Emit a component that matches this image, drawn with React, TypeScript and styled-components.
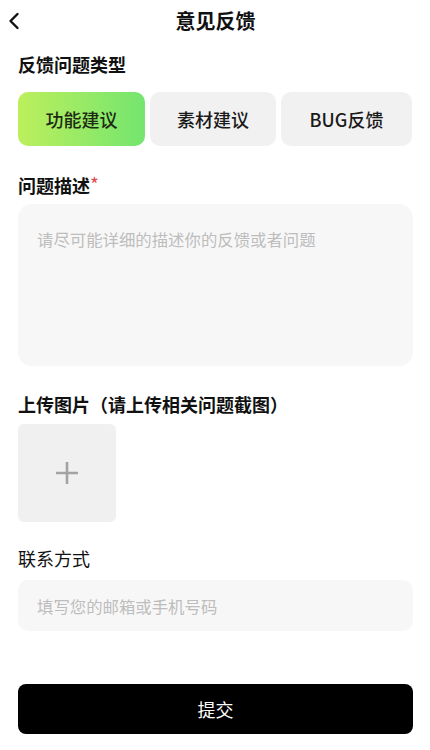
import React, { useState } from "react";
import styled, { createGlobalStyle } from "styled-components";

const Global = createGlobalStyle`
  html, body { margin: 0; padding: 0; background: #fff; }
  body { font-family: "Noto Sans CJK SC", "Noto Sans", sans-serif; color: #111; }
  * { box-sizing: border-box; }
`;

const Page = styled.div`
  width: 430px;
  min-height: 750px;
  padding: 0 17px 0 18px;
  display: flex;
  flex-direction: column;
`;

const Header = styled.header`
  height: 42px;
  position: relative;
  display: flex;
  align-items: center;
  justify-content: center;
`;

const Back = styled.button`
  position: absolute;
  left: -10px;
  top: 12px;
  width: 12px;
  height: 18px;
  border: 0;
  background: none;
  padding: 0;
  display: flex;
`;

const Title = styled.h1`
  margin: 0;
  font-size: 20px;
  font-weight: 700;
  line-height: 28px;
`;

const Label = styled.div<{ $top: number; $bold?: boolean }>`
  margin-top: ${(p) => p.$top}px;
  height: 24px;
  line-height: 24px;
  font-size: 18px;
  font-weight: ${(p) => (p.$bold ? 700 : 400)};
  color: #111;
`;

const Star = styled.span`
  color: #e24c55;
  font-weight: 400;
  font-size: 19px;
  vertical-align: 1px;
`;

const TypeGrid = styled.div`
  margin-top: 16px;
  display: grid;
  grid-template-columns: 127px 126px 131px;
  gap: 5px;
`;

const TypeButton = styled.button<{ $active?: boolean }>`
  height: 54px;
  border: 0;
  border-radius: 10px;
  font-family: inherit;
  font-size: 18px;
  font-weight: 500;
  color: ${(p) => (p.$active ? "#1d2a14" : "#1a1a1a")};
  background: ${(p) =>
    p.$active ? "linear-gradient(90deg, #bcef5c 0%, #74e56f 100%)" : "#f1f1f1"};
  padding: 0;
`;

const TextArea = styled.textarea`
  margin-top: 8px;
  height: 162px;
  width: 100%;
  border: 0;
  border-radius: 14px;
  background: #f7f7f7;
  padding: 23px 19px;
  font-family: inherit;
  font-size: 16.4px;
  line-height: 24px;
  resize: none;
  outline: none;
  &::placeholder { color: #bdbdbd; }
`;

const Upload = styled.div`
  margin-top: 8px;
  width: 98px;
  height: 98px;
  border-radius: 6px;
  background: #f0f0f0;
  display: flex;
  align-items: center;
  justify-content: center;
`;

const Input = styled.input`
  margin-top: 10px;
  height: 51px;
  width: 100%;
  border: 0;
  border-radius: 10px;
  background: #f7f7f7;
  padding: 0 19px;
  font-family: inherit;
  font-size: 16.4px;
  outline: none;
  &::placeholder { color: #bdbdbd; }
`;

const Submit = styled.button`
  margin-top: 53px;
  height: 50px;
  width: 100%;
  border: 0;
  border-radius: 8px;
  background: #000;
  color: #fff;
  font-family: inherit;
  font-size: 18px;
`;

const types = ["功能建议", "素材建议", "BUG反馈"];

export default function App() {
  const [active, setActive] = useState(0);
  return (
    <>
      <Global />
      <Page>
        <Header>
          <Back aria-label="back">
            <svg width="12" height="18" viewBox="0 0 12 18">
              <path d="M9.5 2 L2.5 9 L9.5 16" fill="none" stroke="#111" strokeWidth="2.4" strokeLinecap="round" strokeLinejoin="round" />
            </svg>
          </Back>
          <Title>意见反馈</Title>
        </Header>
        <Label $top={10} $bold>反馈问题类型</Label>
        <TypeGrid>
          {types.map((t, i) => (
            <TypeButton key={t} $active={i === active} onClick={() => setActive(i)}>
              {t}
            </TypeButton>
          ))}
        </TypeGrid>
        <Label $top={26} $bold>
          问题描述<Star>*</Star>
        </Label>
        <TextArea placeholder="请尽可能详细的描述你的反馈或者问题" />
        <Label $top={26} $bold>上传图片（请上传相关问题截图）</Label>
        <Upload>
          <svg width="24" height="24" viewBox="0 0 24 24">
            <path d="M12 1 V23 M1 12 H23" stroke="#a3a3a3" strokeWidth="2.6" />
          </svg>
        </Upload>
        <Label $top={24}>联系方式</Label>
        <Input placeholder="填写您的邮箱或手机号码" />
        <Submit>提交</Submit>
      </Page>
    </>
  );
}
